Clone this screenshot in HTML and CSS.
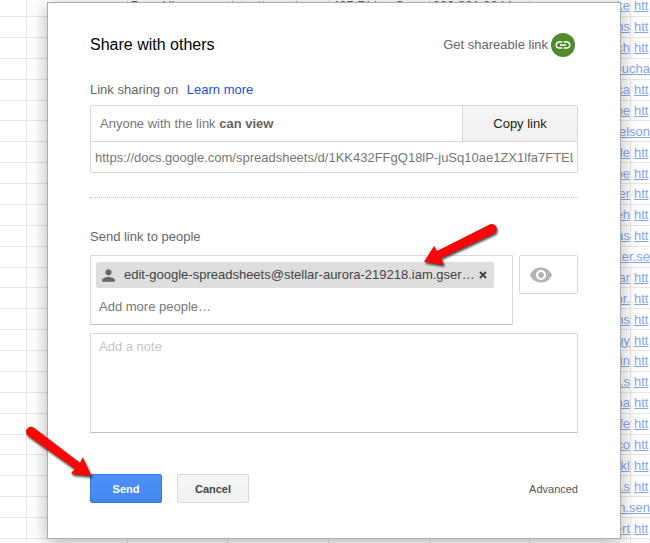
FILE: index.html
```html
<!DOCTYPE html>
<html lang="en">
<head>
<meta charset="utf-8">
<title>Share with others</title>
<link rel="stylesheet" href="styles.css">
</head>
<body>
<table class="sheet">
<colgroup><col class="col-first"><col><col><col><col><col><col><col class="col-last"></colgroup>
<tbody id="rows"></tbody>
</table>
<div class="overlay">
<main class="dialog" role="dialog" aria-labelledby="title">
  <header class="head">
    <h1 id="title">Share with others</h1>
    <button class="shareable" type="button">Get shareable link
      <span class="link-badge"><svg viewBox="0 0 24 24" width="18" height="18"><path d="M3.9 12c0-1.7 1.4-3.1 3.1-3.1h4V7H7c-2.8 0-5 2.2-5 5s2.2 5 5 5h4v-1.9H7c-1.7 0-3.1-1.4-3.1-3.1zM8 13h8v-2H8v2zm9-6h-4v1.9h4c1.7 0 3.1 1.4 3.1 3.1s-1.4 3.1-3.1 3.1h-4V17h4c2.8 0 5-2.200 5-5s-2.200-5-5-5z"/></svg></span>
    </button>
  </header>
  <p class="status"><label for="url">Link sharing on</label> <a href="#">Learn more</a></p>
  <section class="link-box">
    <div class="link-row">
      <button class="access" type="button">Anyone with the link <b>can view</b></button>
      <button class="copy" type="button">Copy link</button>
    </div>
    <input class="url" id="url" readonly value="https://docs.google.com/spreadsheets/d/1KK432FFgQ18lP-juSq10ae1ZX1lfa7FTELG">
  </section>
  <hr class="divider">
  <label class="people-label" for="people">Send link to people</label>
  <div class="people-row">
    <div class="people">
      <div class="chip">
        <svg class="person" viewBox="0 0 24 24" width="19" height="19"><path d="M12 12c2.200 0 4-1.800 4-4s-1.800-4-4-4-4 1.800-4 4 1.800 4 4 4zm0 2c-2.700 0-8 1.300-8 4v2h16v-2c0-2.700-5.300-4-8-4z"/></svg>
        <span class="chip-text">edit-google-spreadsheets@stellar-aurora-219218.iam.gser…</span>
        <button class="remove" type="button" aria-label="Remove"><svg viewBox="0 0 8 8" width="8" height="8"><path d="M1 1l6 6M7 1l-6 6"/></svg></button>
      </div>
      <input class="add" id="people" placeholder="Add more people…">
    </div>
    <button class="role" type="button" aria-label="Can view"><svg viewBox="0 0 24 24" width="24" height="24"><path d="M12 4.500C7 4.500 2.730 7.610 1 12c1.730 4.390 6 7.500 11 7.500s9.270-3.110 11-7.500c-1.730-4.390-6-7.500-11-7.500zM12 17c-2.760 0-5-2.240-5-5s2.240-5 5-5 5 2.240 5 5-2.240 5-5 5zm0-8c-1.660 0-3 1.340-3 3s1.340 3 3 3 3-1.340 3-3-1.340-3-3-3z"/></svg></button>
  </div>
  <textarea class="note" aria-label="Add a note" placeholder="Add a note"></textarea>
  <footer class="actions">
    <button class="btn primary" type="button">Send</button>
    <button class="btn" type="button">Cancel</button>
    <a class="advanced" href="#">Advanced</a>
  </footer>
</main>
</div>
<svg class="arrow arrow-chip" viewBox="0 0 80 46" width="80" height="46"><path d="M4 38.700L14 23l3 5L69.500 1.500a5 5 0 0 1 4.500 9L21 35l3 7z"/></svg>
<svg class="arrow arrow-send" viewBox="0 0 76 60" width="76" height="60"><path d="M69.700 54L60.700 35.300 58 40.700 12 5.700a5 5 0 0 0-6 8L53 47l-3.300 3.300q-1 2 2 2z"/></svg>
<script src="sheet.js"></script>
</body>
</html>
```
FILE: styles.css
```css
* { box-sizing: border-box; }
body {
  margin: 0;
  font: 13px/16px "Liberation Sans", Arial, sans-serif;
  color: #666;
  overflow: hidden;
}
button, input, textarea { font: inherit; color: inherit; margin: 0; }
button { cursor: pointer; }
a { color: #1c50d8; text-decoration: none; }
svg { display: block; }

.sheet {
  width: 100%;
  height: 100vh;
  table-layout: fixed;
  border-collapse: separate;
  border-spacing: 0;
}
.col-first { width: 27px; }
.col-last { width: 19px; }
.sheet td {
  padding: 0;
  border-right: 1px solid #e6e6e6;
  border-bottom: 1px solid #e6e6e6;
  overflow: hidden;
  white-space: nowrap;
  line-height: 15px;
}
.sheet tr:first-child td { height: 17px; padding-left: 3px; line-height: 12px; vertical-align: top; }
.sheet tr:first-child td:nth-child(7) { padding-left: 0; }
.sheet tr:last-child td { height: 4px; border-bottom: 0; }
.sheet .tail { text-align: right; }
.sheet .next { padding-left: 3px; border-right: 0; }
.sheet .wide { border-right: 0; }
.sheet a { color: #86a5ec; text-decoration: underline; }

.overlay {
  position: absolute;
  inset: 0;
  padding: 2px 29px 4px 47px;
}
.dialog {
  padding: 30px 42px 35px;
  background: #fff;
  border: 1px solid #acacac;
  box-shadow: 0 4px 16px rgba(0, 0, 0, .3);
}
.head {
  display: flex;
  justify-content: space-between;
  align-items: center;
  height: 24px;
}
h1 { margin: 0; font-size: 16px; font-weight: 400; color: #000; }
.shareable {
  display: flex;
  align-items: center;
  gap: 3px;
  padding: 0 3px 0 0;
  border: 0;
  background: none;
}
.link-badge {
  display: grid;
  place-items: center;
  width: 24px;
  height: 24px;
  border-radius: 50%;
  background: #508a2a;
}
.link-badge path { fill: #fff; }
.status { margin: 25px 0 7px; }
.status a { margin-left: 5px; }
.link-box { border: 1px solid #d9d9d9; border-radius: 2px; }
.link-row { display: flex; height: 36px; border-bottom: 1px solid #d9d9d9; }
.access {
  flex: 1;
  padding: 0 9px;
  border: 0;
  background: none;
  text-align: left;
  color: #777;
}
.access b { color: #666; }
.copy {
  width: 115px;
  border: 0;
  border-left: 1px solid #d9d9d9;
  background: linear-gradient(#f5f5f5, #f1f1f1);
  color: #222;
}
.url {
  display: block;
  width: 100%;
  height: 30px;
  padding: 0 4px;
  border: 0;
  background: none;
  color: #777;
}
.divider { margin: 24px 0 31px; border: 0; border-top: 1px dotted #bbb; }
.people-label { display: block; }
.people-row { display: flex; align-items: flex-start; gap: 6px; margin-top: 10px; }
.people {
  flex: 1;
  min-width: 0;
  height: 70px;
  padding: 6px 18px 6px 5px;
  border: 1px solid #d9d9d9;
  border-bottom-color: #c0c0c0;
}
.chip {
  display: flex;
  align-items: center;
  height: 26px;
  padding: 0 6px 0 3px;
  border-radius: 2px;
  background: #dedede;
  color: #444;
}
.person { flex: none; fill: #666; }
.chip-text { flex: 1; margin-left: 6px; white-space: nowrap; }
.remove { padding: 1px; border: 0; background: none; }
.remove path { stroke: #444; stroke-width: 2; }
.add {
  display: block;
  width: 100%;
  height: 24px;
  margin-top: 6px;
  padding: 0 3px;
  border: 0;
  background: none;
}
.add::placeholder { color: #777; opacity: 1; }
.role {
  width: 59px;
  height: 39px;
  padding: 0 9px;
  border: 1px solid #d9d9d9;
  border-radius: 2px;
  background: #fff;
}
.role svg { fill: #b3b3b3; }
.note {
  display: block;
  width: 100%;
  height: 100px;
  margin-top: 8px;
  padding: 5px 8px;
  border: 1px solid #d9d9d9;
  border-bottom-color: #c0c0c0;
  resize: none;
}
.note::placeholder { color: #c4c4c4; opacity: 1; }
.actions { display: flex; align-items: center; gap: 15px; margin-top: 41px; font-size: 11px; }
.btn {
  width: 72px;
  height: 29px;
  padding: 0;
  border: 1px solid #d9d9d9;
  border-radius: 2px;
  background: linear-gradient(#f5f5f5, #f1f1f1);
  color: #444;
  font-weight: 700;
}
.primary { border-color: #3079ed; background: linear-gradient(#4d90fe, #4787ed); color: #fff; }
.advanced { margin-left: auto; color: #555; }

.arrow { position: absolute; overflow: visible; filter: drop-shadow(1px 2px 1px rgba(0, 0, 0, .7)); }
.arrow path { fill: #f90606; }
.arrow-chip { left: 420px; top: 223px; }
.arrow-send { left: 22px; top: 422px; }
```
FILE: sheet.js
```js
// Visible ends of the spreadsheet links; "wide" rows run over the next column.
const tails = ["ke", "ns", "ch", "oucha", "ca", "ue", "elson", "de", "be", "er", "eh", "as",
  "ker.se", "kar", "hr.", "ns", "uy", "pin", "l.s", "na", "ofe", ".co", "kl", "d.s", "n.sen", "ert"];
const wide = new Set([3, 6, 12, 24]);
const link = t => `<a href="#">${t}</a>`;
const first = ["", "", "Dora Hi", link("http://www.k"), "425 Ridge C", "262 921 9244"];
const cells = i => Array.from({ length: 6 }, (_, c) => `<td>${i === 0 ? first[c] : ""}</td>`).join("");
document.getElementById("rows").innerHTML = tails.map((t, i) =>
  `<tr>${cells(i)}${wide.has(i)
    ? `<td class="tail wide" colspan="2">${link(t)}</td>`
    : `<td class="tail">${link(t)}</td><td class="next">${link("htt")}</td>`}</tr>`).join("")
  + `<tr>${"<td></td>".repeat(8)}</tr>`;
```
